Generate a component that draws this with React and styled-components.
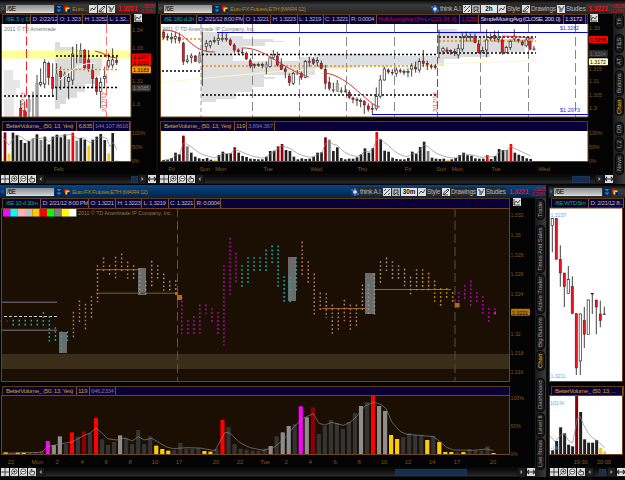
import React from "react";
import styled, { createGlobalStyle } from "styled-components";

const GlobalStyle = createGlobalStyle`
  body {
    margin: 0;
    background: #000;
    overflow: hidden;
  }
  * {
    box-sizing: border-box;
  }
`;

const Screen = styled.div`
  width: 625px;
  height: 480px;
  background: #030303;
  font-family: "Liberation Sans", Arial, sans-serif;
  font-size: 6px;
  letter-spacing: -0.28px;
  color: #c4c4d4;
  overflow: hidden;
`;

const Row = styled.div`
  display: flex;
  height: ${(p) => p.$height}px;
  margin-bottom: 1px;
  overflow: hidden;
`;

const Panel = styled.section`
  width: ${(p) => p.$width}px;
  flex: none;
  display: flex;
  flex-direction: column;
`;

const Divider = styled.div`
  width: ${(p) => p.$width}px;
  flex: none;
  background: linear-gradient(90deg, #161616, #000 45%, #1b1b1b);
`;

const Blank = styled.span`
  width: ${(p) => p.$width}px;
  flex: none;
`;

const TitleBar = styled.header`
  position: relative;
  z-index: 1;
  width: ${(p) => p.$width || "100%"};
  height: ${(p) => p.$height}px;
  flex: none;
  display: flex;
  align-items: center;
  padding: ${(p) => (p.$height === 14 ? "3px 0 0 1px" : "0 0 0 1px")};
  background: ${(p) =>
    p.$active
      ? "linear-gradient(#06458a, #04305f 60%, #062340)"
      : "linear-gradient(#050505, #3a3a3a 35%, #252525)"};
  white-space: nowrap;
`;

const Dot = styled.span`
  width: 3px;
  height: 3px;
  margin-right: 2px;
  border: 1px solid #1673c8;
  border-radius: 50%;
`;

const SymbolInput = styled.span`
  width: 48px;
  height: 8px;
  flex: none;
  padding-left: 1px;
  background: linear-gradient(#8e8e8e, #cacaca);
  border-bottom: 1px solid #ddd;
  color: #000;
  font-size: 6.5px;
  line-height: 8px;
  margin-right: 1px;
`;

const Title = styled.span`
  width: ${(p) => p.$width}px;
  flex: none;
  margin-left: 1px;
  color: #ad8226;
  font-size: 6.2px;
  letter-spacing: ${(p) => p.$spacing ?? -0.55}px;
`;

const Spacer = styled.span`
  flex: 1;
`;

const Tool = styled.span`
  width: ${(p) => p.$width}px;
  height: 9px;
  flex: none;
  display: flex;
  align-items: center;
  gap: 1px;
  margin-right: 1px;
  background: #292929;
  color: #b9b9b9;
  font-size: 6.3px;
  letter-spacing: -0.2px;
`;

const Period = styled(Tool)`
  justify-content: center;
  background: #e3e3e3;
  color: #111;
  font-weight: bold;
  height: 8px;
  letter-spacing: 0;
`;

const LastPrice = styled.span`
  width: ${(p) => p.$width || 22}px;
  flex: none;
  color: #f00b17;
  font-size: 7.2px;
  font-weight: bold;
  letter-spacing: -0.4px;
  text-align: center;
`;

const Change = styled.span`
  width: 16px;
  flex: none;
  color: #e30d18;
  font-size: 5px;
  line-height: 5px;
  letter-spacing: -0.2px;
  text-align: right;
  padding-right: 1px;
`;

const InfoRow = styled.div`
  display: flex;
  height: 10px;
  flex: none;
  padding-left: 2px;
`;

const Cells = styled.div`
  width: ${(p) => p.$width}px;
  flex: none;
  display: flex;
  background: #09003a;
  border: 1px solid #5d3b14;
  border-bottom: 0;
`;

const Cell = styled.span`
  width: ${(p) => p.$width}px;
  flex: none;
  padding-left: ${(p) => p.$pad ?? 2}px;
  border-right: 1px solid #80501c;
  color: ${(p) => p.$color || "#b7b7c8"};
  font-size: 6.2px;
  letter-spacing: ${(p) => p.$spacing ?? -0.42}px;
  line-height: 8px;
  white-space: nowrap;
  overflow: hidden;
`;

const StudyRow = styled(InfoRow)`
  margin-top: ${(p) => p.$gap}px;
`;

const Plot = styled.svg`
  display: block;
  flex: none;
  overflow: visible;
  letter-spacing: 0;
`;

const Icon = styled.svg`
  width: ${(p) => p.$size || 8}px;
  height: ${(p) => p.$size || 8}px;
  flex: none;
`;

const ScrollRow = styled.footer`
  height: 10px;
  flex: none;
  display: flex;
  align-items: center;
  gap: 1px;
  padding-left: ${(p) => p.$left || 1}px;
  background: linear-gradient(#080808, #181818);
`;

const Track = styled.div`
  flex: 1;
  height: 7px;
  display: flex;
  justify-content: flex-end;
  padding-right: ${(p) => p.$after || 0}px;
  background: linear-gradient(#080808, #292929);
`;

const Thumb = styled.div`
  width: ${(p) => p.$width}px;
  background: #152e4e;
  border: 1px solid #1c3658;
`;

const TabStrip = styled.nav`
  width: ${(p) => p.$width}px;
  flex: none;
  display: flex;
  flex-direction: column;
  align-items: center;
  gap: 1px;
  padding-top: 14px;
  background: linear-gradient(90deg, #191919, #3b3b3b);
`;

const Tab = styled.span`
  width: 9px;
  height: ${(p) => p.$height}px;
  flex: none;
  margin-top: ${(p) => p.$gap || 0}px;
  writing-mode: vertical-rl;
  transform: rotate(180deg);
  display: flex;
  align-items: center;
  justify-content: center;
  background: #1a1a1a;
  border: 1px solid #050505;
  border-radius: 4px;
  color: ${(p) => (p.$on ? "#f0bb1c" : "#9c9c9c")};
  font-size: 6px;
  letter-spacing: -0.1px;
  line-height: 7px;
  white-space: nowrap;
`;

const BROWN = "#6f461a";
const LABEL = "#85561d";
const COLORS = {
  k: "#202020",
  g: "#777",
  r: "#f00",
  d: "#8b0008",
  y: "#fc0",
  m: "#f0f",
  l: "#8d8d8d",
  s: "#343434",
};

// text squeezed to the given width
const T = ({ x, y, w, fill = LABEL, size = 6.2, children, ...rest }) => (
  <text
    x={x}
    y={y + 2.3}
    fill={fill}
    fontSize={size}
    textLength={w}
    lengthAdjust="spacingAndGlyphs"
    {...rest}
  >
    {children}
  </text>
);

const Tag = ({ x, y, w = 19, bg, fill = "#000", children }) => (
  <g>
    <rect x={x} y={y - 3.5} width={w} height="7" rx="1" fill={bg} />
    <T x={x + 1} y={y} w={w - 3} fill={fill}>
      {children}
    </T>
  </g>
);

const Dots = ({ x1, x2, y, color = "#000" }) => (
  <line
    x1={x1}
    x2={x2}
    y1={y}
    y2={y}
    stroke={color}
    strokeWidth="1.5"
    strokeDasharray="2 2"
  />
);

const VLine = ({ x, y1, y2, color = "#888", dash = "9 4", w = 1 }) => (
  <line
    x1={x}
    x2={x}
    y1={y1}
    y2={y2}
    stroke={color}
    strokeWidth={w}
    strokeDasharray={dash}
  />
);

// rows are [x, high, low, body top, body bottom, kind]
const Candles = ({ rows, transform }) => (
  <g transform={transform}>
    {rows.map(([x, hi, lo, top, bottom, kind], i) => (
      <g key={i}>
        <line x1={x} x2={x} y1={hi} y2={lo} stroke="#111" strokeWidth="2.4" />
        {top !== undefined && (
          <rect
            x={x - 3.5}
            y={top}
            width="7"
            height={Math.max(bottom - top, 2)}
            fill={kind === "r" ? "#f0111c" : kind === "g" ? "#aaa" : "#fff"}
            stroke={kind === "g" ? "#888" : "#222"}
            strokeWidth={kind === "r" ? 1.4 : 2}
          />
        )}
      </g>
    ))}
  </g>
);

// "107d 139g 158": bar tops followed by a colour letter
const Volume = ({ tops, start, step, base, width, transform, plain = "k", line }) => {
  const bars = tops.split(" ").map((token) => ({
    top: parseInt(token, 10),
    color: COLORS[token.replace(/\d/g, "") || plain],
  }));
  let avg = bars[0].top;
  const points = bars.map((bar, i) => {
    avg += (bar.top - avg) * (bar.top < avg ? 0.6 : 0.32);
    return `${start + i * step},${avg}`;
  });
  return (
    <g transform={transform}>
      {bars.map((bar, i) => (
        <rect
          key={i}
          x={start + i * step - width / 2}
          y={bar.top}
          width={width}
          height={base - bar.top}
          fill={bar.color}
        />
      ))}
      <polyline
        points={line || points.join(" ")}
        fill="none"
        stroke="#888"
        strokeWidth="2"
      />
    </g>
  );
};

const Percents = ({ x, ys }) =>
  ["100%", "50%", "0%"].map((label, i) => (
    <T key={label} x={x} y={ys[i]} w={[13.5, 10.5, 7][i]}>
      {label}
    </T>
  ));

const Times = ({ y, items }) =>
  items.map(([x, label], i) => (
    <text key={i} x={x} y={y + 2.3} fill={LABEL} fontSize="6" letterSpacing="-0.2" textAnchor="middle">
      {label}
    </text>
  ));

const DropIcon = () => (
  <Icon viewBox="0 0 8 8">
    <rect width="8" height="8" fill="#06254c" />
    <path d="M1.5 1h5L4 3.5zM1.5 4.5h5L4 7z" fill="#2687d9" />
  </Icon>
);

const SquaresIcon = () => (
  <Icon viewBox="0 0 8 8">
    <rect x="1" y="1" width="4" height="3.5" fill="#e00" />
    <rect x="2.5" y="2.5" width="4" height="4" fill="#fe0" />
    <rect x="4.3" y="4.2" width="3" height="3" fill="#111" stroke="#0b3cff" strokeWidth=".6" />
  </Icon>
);

const PATHS = {
  style: "M1 6L3 3l2 2 2-3.5",
  draw: "M1 7l1-2.500L6 1l1 1-4 4zM2 7h4",
  study: "M1 2h2v5M3 4h2M4 7l3-6",
  swap: "M1 7l6-6M1 3l2-2M5 7l2-2",
  comment: "M2 2h4v3H4L2 7zM5 6l2 1",
  cross: "M4 0v8M0 4h8",
  hand: "M2.500 7L1 4.500l1-1 1 1V1.500h1v2h2.500V6L6 7z",
  fit: "M0 4h8M2 2L0 4l2 2M6 2l2 2-2 2",
  link: "M1 6l2-3 2 2 2-3M1 1v6h6",
};

const Glyph = ({ name, light, size }) => (
  <Icon viewBox="0 0 8 8" $size={size}>
    <rect width="8" height="8" fill={light ? "#dedede" : "#b5b5b5"} />
    <path d={PATHS[name]} fill="none" stroke="#2a2a2a" strokeWidth={name === "fit" ? 1.2 : 0.85} />
  </Icon>
);

const Lens = ({ plus }) => (
  <Icon viewBox="0 0 8 8">
    <rect width="8" height="8" fill="#dedede" />
    <circle cx="4.3" cy="3.5" r="2.6" fill="#fff" stroke="#222" strokeWidth=".8" />
    <path
      d={plus ? "M2.800 3.500h3M4.300 2v3M2.400 5.400L.7 7.300" : "M2.800 3.500h3M2.400 5.400L.7 7.300"}
      stroke="#222"
      strokeWidth=".8"
    />
  </Icon>
);

const Arrow = ({ left }) => (
  <Icon viewBox="0 0 8 8">
    <rect width="7" height="8" fill="#1e1e1e" />
    <path d={left ? "M4.500 2v4l-2-2z" : "M2.500 2v4l2-2z"} fill="#aaa" />
  </Icon>
);

const Symbol = ({ title, width, spacing }) => (
  <>
    <Dot />
    <SymbolInput>/6E</SymbolInput>
    <DropIcon />
    <SquaresIcon />
    <Title $width={width} $spacing={spacing}>
      {title}
    </Title>
  </>
);

const Price = ({ width }) => (
  <>
    <LastPrice $width={width}>1.3221</LastPrice>
    <Change>
      -.0025
      <br />
      -0.20%
    </Change>
  </>
);

const Tools = ({ period }) => (
  <>
    <Tool $width={31}>
      <Icon viewBox="0 0 8 8">
        <circle cx="4" cy="4" r="3.5" fill="#1b459d" />
        <circle cx="4" cy="4" r="1.8" fill="#e9f2ff" />
        <path d="M0 2h2M6 6h2M4 0v2M4 6v2" stroke="#8fb4ff" strokeWidth=".7" />
      </Icon>
      think A.I.
    </Tool>
    <Tool $width={8}><Glyph name="swap" light /></Tool>
    <Tool $width={8}><Glyph name="comment" /></Tool>
    <Period $width={16}>{period}</Period>
    <Tool $width={23}><Glyph name="style" light />Style</Tool>
    <Tool $width={34}><Glyph name="draw" light />Drawings</Tool>
    <Tool $width={29}><Glyph name="study" light />Studies</Tool>
  </>
);

const Header = ({ width, cells }) => (
  <Cells $width={width}>
    {cells.map(([w, text, color, spacing], i) => (
      <Cell key={i} $width={w} $color={color} $spacing={spacing} $pad={i === 0 ? 3 : 1.5}>
        {text}
      </Cell>
    ))}
  </Cells>
);

const Scroll = ({ left, thumb, after }) => (
  <ScrollRow $left={left}>
    <Glyph name="cross" light />
    <Lens plus />
    <Lens />
    <Glyph name="hand" light />
    <Arrow left />
    <Track $after={after}>
      <Thumb $width={thumb} />
    </Track>
    <Arrow />
    <Glyph name="fit" light />
  </ScrollRow>
);

const YELLOW = "#d0a31a";
const GREEN = "#05b935";

const DAILY = [
  [62, 300, 352, 325, 350, "r"], [74, 305, 352, 332, 350, "r"], [87, 285, 352, 300, 335, "g"],
  [99, 275, 352], [111, 225, 352, 250, 350, "g"], [122, 205, 260, 248, 253],
  [134, 178, 265, 187, 252], [146, 185, 255, 190, 232, "r"], [158, 190, 290, 232, 265, "r"],
  [170, 190, 300, 222, 262, "g"], [182, 200, 270, 215, 230, "r"], [194, 215, 262, 222, 230, "g"],
  [206, 220, 298, 232, 244], [218, 140, 255, 162, 240], [230, 132, 190],
  [242, 130, 188, 152, 187, "g"], [254, 148, 210, 150, 203, "r"], [266, 150, 215, 180, 205, "r"],
  [278, 190, 265, 212, 236, "r"], [290, 230, 285, 236, 275, "r"], [302, 232, 325, 248, 275],
  [314, 200, 260, 230, 235], [326, 160, 205, 182, 198], [338, 145, 205, 180, 195], [350, 170, 195, 182, 188, "r"],
];

const HOURLY = [
  [26, 92, 118, 96, 112, "r"], [38, 100, 122, 110, 113, "r"], [50, 98, 130, 112, 116], [61, 95, 130, 110, 115],
  [73, 98, 130, 112, 122, "r"], [85, 125, 195, 129, 185, "r"], [97, 165, 190, 180, 184], [109, 160, 190, 168, 172],
  [121, 165, 185, 168, 185, "r"], [133, 155, 190, 165, 187, "g"], [142, 95, 258], [154, 120, 155, 130, 140],
  [166, 120, 145, 125, 137], [178, 110, 130, 122, 124], [190, 100, 135, 116, 122], [202, 95, 125, 115, 119],
  [214, 100, 125, 116, 118], [226, 115, 138, 120, 134, "r"], [238, 130, 160, 135, 150, "r"],
  [250, 145, 165, 150, 155, "r"], [262, 145, 166, 157, 159, "r"], [274, 155, 180, 160, 177, "r"],
  [286, 175, 205, 182, 198, "r"], [298, 190, 205, 194, 196], [310, 188, 200, 194, 196], [322, 188, 205, 194, 195],
  [334, 185, 222, 193, 203, "g"], [345, 170, 203, 174, 200], [355, 150, 180, 165, 173],
  [367, 155, 200, 168, 195, "r"], [379, 175, 210, 195, 208, "r"], [391, 200, 235, 207, 215, "r"],
  [403, 220, 258, 228, 248, "r"], [415, 215, 255, 220, 250], [427, 210, 225], [439, 215, 240, 220, 232, "r"],
  [451, 180, 235, 185, 232], [463, 170, 200, 184, 188], [475, 172, 195, 178, 190, "r"],
  [487, 172, 200, 182, 186], [499, 182, 208, 190, 206, "r"], [511, 195, 268, 208, 250, "r"],
  [523, 230, 272, 248, 265, "r"], [535, 248, 278, 270, 272], [547, 240, 275, 250, 274, "g"],
  [559, 262, 280, 273, 275], [571, 255, 278, 273, 274, "r"], [583, 270, 297, 278, 292, "r"],
  [594, 290, 310, 294, 298, "r"], [606, 292, 318, 298, 302, "r"], [617, 295, 322, 302, 304],
  [628, 300, 342, 305, 315, "r"], [640, 310, 335, 318, 328, "r"], [652, 310, 342, 325, 328, "r"],
  [664, 262, 332, 290, 326], [676, 225, 295, 240, 290], [688, 200, 242, 207, 240], [700, 205, 222, 210, 216, "r"],
  [712, 208, 226, 217, 219, "r"], [724, 202, 230, 210, 220], [736, 205, 220, 212, 214, "r"],
  [747, 208, 225, 215, 217], [759, 205, 232, 215, 218], [770, 190, 230, 198, 207], [782, 185, 218, 203, 207, "r"],
  [793, 175, 218, 185, 210], [805, 150, 200, 183, 190, "r"], [817, 182, 210, 190, 194, "r"],
  [829, 192, 208, 198, 201, "r"], [841, 192, 208, 199, 203, "r"], [852, 90, 175],
  [864, 140, 164, 145, 153], [876, 142, 160, 150, 154, "r"], [887, 148, 164, 152, 155, "r"],
  [899, 146, 168, 155, 158, "r"], [910, 132, 175, 145, 165], [922, 98, 155, 112, 147], [934, 95, 125, 108, 113],
  [946, 100, 125, 110, 113], [960, 100, 130, 110, 128, "r"], [971, 120, 160, 132, 158, "r"],
  [983, 140, 160, 152, 156], [995, 88, 172, 120, 150], [1007, 100, 122, 113, 116], [1019, 92, 125, 106, 115, "r"],
  [1030, 92, 128, 114, 118], [1042, 110, 165, 120, 158, "r"], [1054, 138, 160, 143, 157],
  [1066, 118, 150, 125, 142], [1078, 88, 125, 108, 117], [1090, 115, 128, 119, 121, "r"],
  [1102, 120, 138, 126, 134, "r"], [1114, 110, 142, 120, 137], [1125, 110, 150, 125, 148, "r"], [1137, 138, 152, 147, 149],
];

const WEEK = [
  [547, 115, 217, 116, 137], [559, 115, 238, 115, 238, "r"], [571, 196, 320, 238, 279, "r"],
  [583, 279, 381, 279, 320, "r"], [595, 258, 341, 299, 341], [607, 289, 401, 320, 401, "r"],
  [619, 400, 585, 401, 564, "r"], [631, 400, 585, 402, 543], [643, 381, 504, 422, 463, "r"],
  [655, 359, 463, 360, 463], [667, 340, 402, 340, 341], [679, 360, 463, 360, 381, "r"],
  [691, 362, 442, 402, 422, "r"], [703, 380, 404, 402, 403],
];

// market profile columns: [first y, last y, colour], one per half hour
const P = "#b07872";
const C = "#12b3b3";
const M = "#c800c8";
const W = "#969090";
const Y = "#c99516";
const PROFILE = [
  [363, 363, M], [363, 363, M], [361, 375, C], [361, 375, C], [361, 375, C], [361, 375, C], [361, 375, C], [338, 375, C],
  [350, 423, C], [383, 423, C], [396, 457, C], [396, 424, C], [337, 412, P], [303, 365, P],
  [313, 388, P], [290, 354, P], [197, 305, P], [174, 212, P], [197, 224, P], [172, 234, P],
  [162, 212, P], [186, 235, P], [197, 235, W], [207, 282, W], [244, 282, W], [184, 259, W],
  [197, 234, W], [222, 271, W], [244, 271, W], [242, 271, W], [292, 400, M], [362, 400, M],
  [350, 400, M], [315, 400, M], [315, 340, M], [326, 364, M], [338, 400, M], [197, 435, M],
  [115, 283, M], [160, 248, M], [197, 260, C], [173, 248, C], [173, 212, C], [173, 212, C],
  [150, 212, C], [138, 189, C], [138, 260, C], [230, 305, C], [232, 306, C], [173, 272, C],
  [126, 224, P], [185, 248, P], [222, 342, P], [279, 329, P], [281, 352, P], [315, 400, P],
  [327, 388, P], [301, 364, P], [315, 388, P], [315, 376, P], [255, 329, W], [255, 342, W],
  [222, 342, W], [185, 247, W], [174, 212, W], [185, 235, W], [197, 235, W], [208, 257, W],
  [232, 282, W], [209, 269, W], [209, 269, Y], [220, 269, Y], [243, 304, Y], [266, 318, Y],
  [266, 294, Y], [278, 304, Y], [278, 316, M], [257, 294, M], [243, 316, M], [278, 304, M],
  [290, 340, M], [326, 364, M], [326, 340, M],
];

const HOURLY_VOL =
  "180 179 174 158 163 107d 139g 158 170 175 177 174 179 179y 165 155 162 160 142d 158 168 171 176 177 178 178 170 153 152 139d 132d 150 153 170 178 175 177 176 170 158 157 112d 119g 153 142 174 178 176 176 172 163 145 158 144 96r 118 152 155 173 177 178 178 174 155 161 141 125 153g 173 176 177 176 179y 178 174 165 158 166 167 175 176 176 165r 177 168 147 150 150g 132r 158 164 168 175 177";

const HALF_VOL =
  "322y 324 323y 323y 322 321 318 288m 300l 274l 297 262r 275 259d 264 219r 283 300 291 271l 280 297 255 297 274 302y 312y 317y 315 294 311 311 309 318y 320y 311 225r 246 297 311 314 317 317 311 303l 274 262l 243l 237 184m 217l 187d 267 243 225 234 252 231 204 183l 171 153r 183l 198l 270y 282y 276 264 270 270 285y 273 291y 321y 321y 320 321y 312 317 317 304 324y";

const HALF_LINE =
  "8,325 125,322 143,305 180,297 215,291 251,272 270,264 288,250 304,262 322,281 350,285 375,279 397,288 415,275 432,285 455,280 500,306 520,311 560,308 600,309 645,317 660,290 675,262 690,265 720,293 750,308 790,316 820,308 850,285 880,248 905,222 940,206 957,235 975,240 995,232 1030,241 1050,232 1070,215 1095,183 1120,172 1140,177 1158,190 1175,230 1200,259 1220,268 1260,271 1300,275 1320,290 1340,307 1360,315 1420,316 1460,312 1480,317";

const SWATCHES = ["#f0f", "#0ff", "#ffb0b5", "#c0c0c0", "#ffc800", "#f00", "#0f0", "#808080", "#ff0", "#fff"];

const DailyPanel = () => (
  <Panel $width={156}>
    <TitleBar $height={14}>
      <Symbol title="Euro ..." width={17} spacing={-0.4} />
      <Tool $width={8}><Glyph name="style" light /></Tool>
      <Tool $width={8}><Glyph name="draw" light /></Tool>
      <Tool $width={8}><Glyph name="study" light /></Tool>
      <Price width={23} />
    </TitleBar>
    <InfoRow>
      <Header
        width={129}
        cells={[[28, "/6E 5 y D", GREEN, -0.2], [27, "D: 2/22/12", undefined, -0.35], [25, "O: 1.323", undefined, -0.3], [25, "H: 1.3252"], [23, "L: 1.32..."]]}
      />
      <Spacer />
      <Glyph name="link" light />
      <Blank $width={14} />
    </InfoRow>
    <Plot width="154" height="94" viewBox="0 24 154 94">
      <rect x="2" y="24" width="129" height="93" fill="#fff" />
      <path d="M4 70h9v10h7v8h-4v8H4zM4 96h10v20H4z" fill="#e6e6e6" />
      <path d="M55 42h5v5h14v8h6v-5h8v6h14v12h-2v8h-5v8h-10v8H77v6H66v6h-6v5h-5z" fill="#dcdcdc" />
      <rect x="2" y="50.5" width="129" height="8" fill="#ff7" opacity=".75" />
      <VLine x={26.5} y1={24} y2={117} color="#f22" dash="9 3.5" />
      <VLine x={106.5} y1={24} y2={117} color="#f77" dash="9 3.5" />
      <Candles rows={DAILY} transform="scale(.3333)" />
      <path d="M95 51Q101 52 106 55T117 58" fill="none" stroke="#d22" />
      <path d="M60 80Q78 62 95 63" fill="none" stroke="#fff" />
      <Dots x1={56} x2={119} y={56} />
      <Dots x1={55} x2={118} y={69.5} color="#f80" />
      <Dots x1={55} x2={118} y={87.5} />
      <Dots x1={4} x2={54} y={96} />
      <T x={4} y={29} w={52} fill="#777">2011 © TD Ameritrade</T>
      <text transform="translate(25 112) rotate(-90)" fontSize="6.2" fill="#e33" textLength="20">1/20/12</text>
      <text transform="translate(105.5 112) rotate(-90)" fontSize="6.2" fill="#e33" textLength="20">2/17/12</text>
      <path d="M1.500 24v93H131V24" fill="none" stroke={BROWN} />
      <T x={132} y={29.5} w={11}>1.34</T>
      <T x={132} y={48} w={11}>1.33</T>
      <T x={132} y={81} w={11}>1.31</T>
      <T x={132} y={104} w={8}>1.3</T>
      <Tag x={132} y={57} bg="#f00">1.3247</Tag>
      <Tag x={132} y={62.5} bg="#f00">1.3221</Tag>
      <Tag x={132} y={69.8} bg="#f90">1.3183</Tag>
      <Tag x={132} y={88} bg="#333" fill="#888">1.3085</Tag>
    </Plot>
    <StudyRow $gap={3}>
      <Header width={129} cells={[[74, "BetterVolume_ (50, 13, Yes)", YELLOW, -0.37], [16.5, "6,835", YELLOW, -0.4], [36, "144,107.8616", "#77779a", -0.4]]} />
    </StudyRow>
    <Plot width="154" height="43" viewBox="0 131 154 43">
      <rect x="2" y="131" width="129" height="30.5" fill="#fff" />
      <Volume
        tops="97d 161y 98 105 120 129 123 115g 103 120g 110 133 110 104 112 103 118g 98r 122g 114 119 137y 119 110 102 120 160y 99 181y"
        start={15}
        step={11.97}
        base={183}
        width={8}
        transform="translate(0 100) scale(.3333)"
        line="9,110 26,135 38,120 50,105 62,110 75,119 90,124 108,113 120,116 132,113 148,125 165,110 190,107 215,103 232,116 250,113 270,128 290,118 305,110 320,115 330,140 340,127 351,150"
      />
      <path d="M1.500 131v30.500H131V131" fill="none" stroke={BROWN} />
      <Percents x={132} ys={[132.5, 147, 161]} />
      <Times y={168.5} items={[[58.5, "Feb"]]} />
    </Plot>
    <Scroll thumb={7} />
  </Panel>
);

const HourlyPanel = () => (
  <Panel $width={455}>
    <TitleBar $height={14} $width="467px">
      <Symbol title="Euro FX Futures,ETH (MAR4 12)" width={90} />
      <Spacer />
      <Tools period="2h" />
      <Price width={22} />
    </TitleBar>
    <InfoRow>
      <Header
        width={428}
        cells={[
          [35.5, "/6E 180 d 2h", GREEN], [47.5, "D: 2/21/12 8:00 PM"], [27, "O: 1.3221"], [26.5, "H: 1.3223"],
          [26, "L: 1.3219"], [26, "C: 1.3221"], [27, "R: 0.0004"],
          [83, "HullMovingAvg ((H+L+C)/3, 34, 0)", "#b4102b", -0.47], [19.5, "1.3256", "#b4102b", -0.4],
          [84.5, "SimpleMovingAvg (CLOSE, 200, 0)", "#deded8", -0.56], [22, "1.3172", "#deded8", -0.3],
        ]}
      />
      <Spacer />
      <Glyph name="link" light />
      <Blank $width={15} />
    </InfoRow>
    <Plot width="455" height="94" viewBox="158 24 455 94">
      <rect x="160" y="24" width="428" height="93" fill="#fff" />
      <path d="M201 32h28v4h14v3h30v2h12v1h-20v4h-22v6h-10v9h66v-4h16v-3h75v2h54v10H358v2h-43v7H264v2h11v2h-11v8h-12v5h-16v3h52v1h-52v3h-20v3h-15z" fill="#dfdfdf" />
      <path d="M438 29h19v2h28v8h40v13h-35v5h-30v2h-22z" fill="#dcdcdc" />
      <path d="M310 62.500h127v3H310z" fill="#d5e3ec" />
      {[252.5, 299.5, 346.5, 394.5, 480.5, 528.5, 575.5].map((x) => (
        <VLine key={x} x={x} y1={24} y2={117} />
      ))}
      <VLine x={201} y1={24} y2={117} color="#999" dash="4 3" />
      <VLine x={437.5} y1={24} y2={117} color="#e22" dash="8 3" />
      <path d="M162 82.500C215 77 240 75 285 71T420 65T534 62" fill="none" stroke="#fff9c0" />
      <path d="M217 32.500h371M372 114.500h216" stroke="#00e" fill="none" />
      <Dots x1={162} x2={200} y={39} color="#f80" />
      <Dots x1={162} x2={200} y={71} />
      <Dots x1={202} x2={437} y={54.5} />
      <Dots x1={202} x2={437} y={66} color="#f80" />
      <Dots x1={202} x2={437} y={95} />
      <Dots x1={439} x2={536} y={37} />
      <Dots x1={439} x2={536} y={41} color="#f80" />
      <Dots x1={439} x2={536} y={53} />
      <Candles rows={HOURLY} transform="translate(155 0) scale(.3333)" />
      <g fill="none" stroke="#d33">
        <path d="M163 30C190 30 188 53 215 52" />
        <path d="M242 48C265 47 280 68 309 77" />
        <path d="M325 73C350 76 368 106 380 107" />
        <path d="M502 36Q520 36 534 39" />
      </g>
      <T x={162} y={29} w={93} fill="#777">2011 © TD Ameritrade IP Company, Inc.</T>
      <T x={560} y={28} w={19} fill="#33d">$1.3282</T>
      <T x={560} y={110} w={20} fill="#33d">$1.2973</T>
      <text transform="translate(436.5 112) rotate(-90)" fontSize="6.2" fill="#e33" textLength="20">2/17/12</text>
      <path d="M160.500 24v93H588V24" fill="none" stroke={BROWN} />
      <T x={589} y={28} w={11}>1.33</T>
      <Tag x={589} y={39.5} bg="#f00">1.3256</Tag>
      <Tag x={589} y={53.5} bg="#2b2b2b" fill="#777">1.3204</Tag>
      <T x={589} y={68.5} w={13}>1.315</T>
      <Tag x={589} y={61.8} bg="#ffffc8">1.3172</Tag>
      <T x={589} y={81} w={10}>1.31</T>
      <T x={589} y={94.5} w={13}>1.305</T>
      <T x={589} y={108} w={8}>1.3</T>
    </Plot>
    <StudyRow $gap={3}>
      <Header width={428} cells={[[73.5, "BetterVolume_ (50, 13, Yes)", YELLOW, -0.37], [12, "119", YELLOW, -0.2], [28, "3,894.367", "#77779a", -0.3]]} />
    </StudyRow>
    <Plot width="455" height="43" viewBox="158 131 455 43">
      <rect x="160" y="131" width="428" height="30.5" fill="#fff" />
      <Volume tops={HOURLY_VOL} start={26} step={11.84} base={183} width={8} transform="translate(155 100) scale(.3333)" />
      <path d="M160.500 131v30.500H588V131" fill="none" stroke={BROWN} />
      <Percents x={589} ys={[132.5, 147, 161]} />
      <Times
        y={168.5}
        items={[[171.5, "Fri"], [204.5, "Sun"], [220.5, "Mon"], [268, "Tue"], [316, "Wed"], [362, "Thu"], [408, "Fri"], [441, "Sun"], [457, "Mon"], [496, "Tue"], [544, "Wed"]]}
      />
    </Plot>
    <Scroll left={2} thumb={18} after={5} />
  </Panel>
);

const ProfilePanel = () => (
  <Panel $width={535}>
    <TitleBar $height={13} $width="546px" $active>
      <Symbol title="Euro FX Futures,ETH (MAR4 12)" width={90} />
      <Spacer />
      <Tools period="30m" />
      <Price width={23} />
    </TitleBar>
    <InfoRow>
      <Header
        width={508}
        cells={[
          [38, "/6E 10 d 30m", GREEN], [48, "D: 2/21/12 8:00 PM"], [27, "O: 1.3221"], [26, "H: 1.3223"],
          [26.5, "L: 1.3219"], [26.5, "C: 1.3221"], [26, "R: 0.0004"],
        ]}
      />
      <Spacer />
      <Glyph name="link" light />
      <Blank $width={14} />
    </InfoRow>
    <Plot width="535" height="174" viewBox="0 208 535 174">
      <rect x="1.5" y="208.5" width="508" height="173" fill="#1a0f02" stroke={BROWN} />
      <rect x="2" y="354" width="507" height="15" fill="#3a2d1a" />
      {SWATCHES.map((color, i) => (
        <rect key={color} x={3 + i * 7.33} y="209" width="7.4" height="7.5" fill={color} />
      ))}
      <T x={78} y={213} w={94} fill="#85796c">2011 © TD Ameritrade IP Company, Inc.</T>
      <VLine x={177.5} y1={208} y2={381} color="#5c5148" dash="9 4" />
      <VLine x={455} y1={208} y2={381} color="#4b4139" w={1.3} dash="9 4" />
      <path d="M59 332h8v21h-8zM138 268h8v27h-8zM288 257h8v44h-8zM365 273h10v41h-10z" fill="#6b6b6b" />
      <path d="M2 302.300h55M2 330.300h55" stroke="#5d5361" strokeWidth="1.5" />
      <path d="M4 316.500h53" stroke="#ccc" strokeDasharray="3 2" />
      <path d="M96 269.700h43M322 308.500h43M375 289.500h76" stroke="#a3660c" />
      <path d="M96 293.200h81" stroke="#5c4320" strokeWidth="1.4" />
      {PROFILE.map(([from, to, color], i) => (
        <line
          key={i}
          x1={1.2 + i * 6.02}
          x2={1.2 + i * 6.02}
          y1={199.5 + from / 3}
          y2={200.5 + to / 3}
          stroke={color}
          strokeWidth="1.5"
          strokeDasharray="1.7 2.26"
        />
      ))}
      <path d="M177 295h5v5h-5zM455 303h4.500v4.500H455zM175 292h3v3h-3z" fill="#b36a12" />
      <path d="M493 313l3-2v4z" fill="#d010c0" />
      {[[215, "1.332"], [235, "1.33"], [254.5, "1.328"], [274, "1.326"], [294, "1.324"], [333.5, "1.32"], [352.5, "1.318"], [372, "1.316"]].map(([y, label]) => (
        <T key={y} x={510.5} y={y} w={label.length * 2.7 - 0.5}>{label}</T>
      ))}
      <Tag x={511} y={312.3} w={19} bg="#b87400">1.3221</Tag>
    </Plot>
    <StudyRow $gap={4}>
      <Header width={508} cells={[[73.5, "BetterVolume_ (50, 13, Yes)", YELLOW, -0.37], [13, "119", YELLOW, -0.2], [26, "646.2334", "#77779a", -0.42]]} />
    </StudyRow>
    <Plot width="535" height="71" viewBox="0 396 535 71">
      <rect x="1.5" y="395.5" width="508" height="59" fill="#1a0f02" stroke={BROWN} />
      <Volume
        tops={HALF_VOL}
        start={17}
        step={18.07}
        base={327}
        width={12.5}
        plain="s"
        transform="translate(0 345) scale(.3333)"
        line={HALF_LINE}
      />
      <Percents x={510.5} ys={[397.5, 425.5, 454]} />
      <Times
        y={462}
        items={[[11, "22"], [37, "Mon"], [57, "2"], [82, "4"], [106, "6"], [130, "8"], [155, "10"], [179, "17"], [216, "20"], [240, "22"], [265, "Tue"], [286, "2"], [310, "4"], [335, "6"], [359, "8"], [384, "10"], [408, "12"], [432, "14"], [457, "17"], [493, "20"]]}
      />
    </Plot>
    <Scroll thumb={72} after={50} />
  </Panel>
);

const WeekPanel = () => (
  <Panel $width={76}>
    <TitleBar $height={13}>
      <Symbol title="..." width={8} spacing={0} />
    </TitleBar>
    <InfoRow>
      <Header width={73} cells={[[37, "/6E WTD 5m", GREEN, -0.5], [35, "D: 2/21/12 8:...", undefined, -0.42]]} />
    </InfoRow>
    <Plot width="76" height="174" viewBox="549 208 76 174">
      <rect x="549.5" y="208" width="73" height="173.5" fill="#fff" stroke={BROWN} />
      <Candles rows={WEEK} transform="translate(370 180) scale(.3333)" />
      <T x={550.5} y={215} w={16} fill="#5fa9ee">1.3237</T>
      <T x={550.5} y={375.5} w={15} fill="#5fa9ee">1.3211</T>
    </Plot>
    <StudyRow $gap={4}>
      <Header width={73} cells={[[71, "BetterVolume_ (50, 13, ...", YELLOW, -0.37]]} />
    </StudyRow>
    <Plot width="76" height="71" viewBox="549 396 76 71">
      <rect x="549.5" y="395.5" width="73" height="59" fill="#fff" stroke={BROWN} />
      <Volume
        tops="316 288 247 265 299 304 153d 201 283 293 293 285 308y 319y"
        start={758}
        step={12}
        base={327}
        width={9}
        transform="translate(300 345) scale(.3333)"
        line="750,273 765,290 782,270 795,268 805,286 818,294 832,220 841,215 850,238 865,265 880,280 892,288 914,308"
      />
      <T x={550} y={403} w={14} fill="#5fa9ee">101%</T>
      <T x={550.5} y={447.5} w={9} fill="#5fa9ee">-1%</T>
      <Times y={462} items={[[580.5, "19:30"], [604, "20:00"]]} />
    </Plot>
    <Scroll thumb={7} after={1} />
  </Panel>
);

const App = () => (
  <>
    <GlobalStyle />
    <Screen>
      <Row $height={184}>
        <DailyPanel />
        <Divider $width={2} />
        <HourlyPanel />
        <TabStrip $width={12}>
          <Tab $height={15}>Ttl</Tab>
          <Tab $height={19} $gap={4}>T&amp;S</Tab>
          <Tab $height={13} $gap={1}>AT</Tab>
          <Tab $height={26} $gap={1}>Buttons</Tab>
          <Tab $height={19} $on>Chart</Tab>
          <Tab $height={14} $gap={5}>DB</Tab>
          <Tab $height={15}>L 2</Tab>
          <Tab $height={22}>News</Tab>
        </TabStrip>
      </Row>
      <Row $height={292}>
        <ProfilePanel />
        <TabStrip $width={11}>
          <Tab $height={21}>Trade</Tab>
          <Tab $height={48} $gap={4}>Times And Sales</Tab>
          <Tab $height={40}>Active Trader</Tab>
          <Tab $height={35}>Big Buttons</Tab>
          <Tab $height={20} $on>Chart</Tab>
          <Tab $height={34} $gap={6}>Dashboard</Tab>
          <Tab $height={24}>Level II</Tab>
          <Tab $height={32}>Live News</Tab>
        </TabStrip>
        <Divider $width={3} />
        <WeekPanel />
      </Row>
    </Screen>
  </>
);

export default App;
